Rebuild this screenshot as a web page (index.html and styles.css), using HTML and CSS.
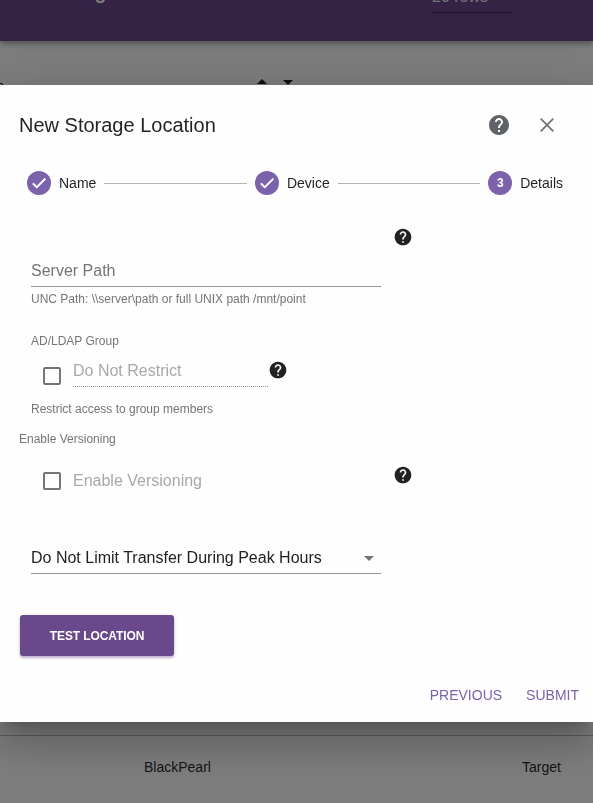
FILE: index.html
```
<!DOCTYPE html>
<html lang="en">
<head>
    <meta charset="UTF-8">
    <meta name="viewport" content="width=device-width, initial-scale=1.0">
    <title>New Storage Location</title>
    <link rel="stylesheet" href="styles.css">
</head>
<body>
    <svg class="symbols">
        <symbol id="help" viewBox="0 0 24 24">
            <path d="M12 2C6.48 2 2 6.48 2 12s4.48 10 10 10 10-4.48 10-10S17.52 2 12 2zm1 17h-2v-2h2v2zm2.07-7.75l-.9.92C13.45 12.9 13 13.5 13 15h-2v-.5c0-1.1.45-2.1 1.17-2.83l1.24-1.26c.37-.36.59-.86.59-1.41 0-1.1-.9-2-2-2s-2 .9-2 2H8c0-2.21 1.79-4 4-4s4 1.79 4 4c0 .88-.36 1.68-.93 2.25z"/>
        </symbol>
        <symbol id="check" viewBox="0 0 24 24">
            <path d="M9 16.2L4.8 12l-1.4 1.4L9 19 21 7l-1.4-1.4L9 16.2z"/>
        </symbol>
    </svg>

    <div class="page">
        <div class="toolbar">
            <span class="toolbar-title">Storage</span>
            <span class="rows">20 rows</span>
        </div>
        <div class="table-head">
            <span class="sort-name">Name</span>
            <span class="arrow-up"></span>
            <span class="arrow-down"></span>
        </div>
        <div class="table-row">
            <span>BlackPearl</span>
            <span>Target</span>
        </div>
    </div>

    <div class="overlay">
        <div class="dialog">
            <div class="dialog-header">
                <h2>New Storage Location</h2>
                <svg class="header-help"><use href="#help"/></svg>
                <svg class="close" viewBox="0 0 14 14"><path d="M.7.7l12.6 12.6M13.3.7L.7 13.3"/></svg>
            </div>

            <div class="stepper">
                <span class="step-icon"><svg><use href="#check"/></svg></span>
                <span class="step-label">Name</span>
                <span class="step-line"></span>
                <span class="step-icon"><svg><use href="#check"/></svg></span>
                <span class="step-label">Device</span>
                <span class="step-line"></span>
                <span class="step-icon">3</span>
                <span class="step-label">Details</span>
            </div>

            <div class="form">
                <div class="row path-row">
                    <div class="field">
                        <div class="input placeholder">Server Path</div>
                        <div class="hint">UNC Path: \\server\path or full UNIX path /mnt/point</div>
                    </div>
                    <svg class="help"><use href="#help"/></svg>
                </div>

                <div class="label group-label">AD/LDAP Group</div>
                <div class="row group-row">
                    <span class="checkbox"></span>
                    <div class="input disabled">Do Not Restrict</div>
                    <svg class="help"><use href="#help"/></svg>
                </div>
                <div class="hint group-hint">Restrict access to group members</div>

                <div class="label version-label">Enable Versioning</div>
                <div class="row version-row">
                    <span class="checkbox"></span>
                    <span class="check-text">Enable Versioning</span>
                    <svg class="help"><use href="#help"/></svg>
                </div>

                <div class="input select">
                    <span>Do Not Limit Transfer During Peak Hours</span>
                    <span class="caret"></span>
                </div>

                <button class="btn-test">TEST LOCATION</button>
            </div>

            <div class="actions">
                <button class="btn-link">PREVIOUS</button>
                <button class="btn-link">SUBMIT</button>
            </div>
        </div>
    </div>
</body>
</html>
```
FILE: styles.css
```
* {
    box-sizing: border-box;
}
body {
    margin: 0;
    height: 803px;
    overflow: hidden;
    background-color: #fafafa;
    font-family: "Liberation Sans", Arial, sans-serif;
    color: rgba(0, 0, 0, 0.87);
}
svg {
    display: block;
    flex: none;
}
.symbols {
    position: absolute;
    width: 0;
    height: 0;
}

/* page behind the dialog */
.page {
    height: 803px;
    overflow: hidden;
}
.toolbar {
    display: flex;
    height: 41px;
    padding-left: 46px;
    background-color: #6b468c;
    color: #fff;
    box-shadow: 0 2px 4px -1px rgba(0, 0, 0, 0.2), 0 4px 5px rgba(0, 0, 0, 0.14), 0 1px 10px rgba(0, 0, 0, 0.12);
}
.toolbar-title {
    width: 386px;
    margin-top: -19px;
    font-size: 19px;
    font-weight: bold;
    line-height: 23px;
}
.rows {
    width: 80px;
    height: 31px;
    margin-top: -18px;
    padding-top: 6px;
    border-bottom: 1px solid #42224f;
    font-size: 16px;
    line-height: 18px;
    color: rgba(255, 255, 255, 0.87);
}
.table-head {
    display: flex;
    align-items: flex-start;
    height: 695px;
    padding-top: 38px;
    border-bottom: 1px solid #b4b4b4;
}
.sort-name {
    width: 255px;
    margin: -1px 0 0 -33px;
    font-size: 14px;
    line-height: 16px;
}
.arrow-up,
.arrow-down {
    margin-left: 35px;
    border: 5px solid transparent;
    border-top: 0;
    border-bottom-color: #222;
}
.arrow-down {
    margin: 1px 0 0 16px;
    border-top: 5px solid #222;
    border-bottom: 0;
}
.table-row {
    display: flex;
    justify-content: space-between;
    padding: 23px 32px 0 144px;
    font-size: 14px;
    line-height: 16px;
}

.overlay {
    position: fixed;
    inset: 0;
    padding-top: 85px;
    background-color: rgba(0, 0, 0, 0.5);
}
.dialog {
    height: 637px;
    background-color: #fefefe;
    box-shadow: 0 11px 15px -7px rgba(0, 0, 0, 0.2), 0 24px 38px 3px rgba(0, 0, 0, 0.14), 0 9px 46px 8px rgba(0, 0, 0, 0.12);
}
.dialog-header {
    display: flex;
    align-items: center;
    height: 80px;
    padding: 0 39px 0 19px;
}
.dialog-header h2 {
    flex: 1;
    margin: 0;
    font-size: 20px;
    font-weight: normal;
}
.header-help {
    width: 24px;
    height: 24px;
    fill: #5f6368;
}
.close {
    width: 14px;
    height: 14px;
    margin-left: 29px;
    fill: none;
    stroke: #757575;
    stroke-width: 1.9;
}

.stepper {
    display: flex;
    align-items: center;
    gap: 8px;
    padding: 6px 30px 0 27px;
}
.step-icon {
    display: flex;
    align-items: center;
    justify-content: center;
    width: 24px;
    height: 24px;
    border-radius: 50%;
    background-color: #7b62aa;
    color: #fff;
    font-size: 12px;
    font-weight: bold;
}
.step-icon svg {
    width: 18px;
    height: 18px;
    fill: #fff;
    stroke: #fff;
    stroke-width: 0.9;
}
.step-label {
    font-size: 14px;
}
.step-line {
    flex: 1;
    height: 1px;
    background-color: #b3b3b3;
}

.form {
    height: 475px;
    padding: 33px 20px 0 31px;
}
.row {
    display: flex;
    align-items: flex-start;
}
.field {
    width: 350px;
}
.input {
    height: 25px;
    border-bottom: 1px solid #949494;
    font-size: 16px;
    line-height: 18px;
}
.placeholder {
    color: #757575;
}
.hint,
.label {
    font-size: 12px;
    line-height: 14px;
    color: #757575;
}
.help {
    width: 20px;
    height: 20px;
    margin-top: -1px;
    fill: #222;
}
.path-row .field {
    padding-top: 34px;
}
.path-row .hint {
    margin-top: 5px;
}
.path-row .help {
    margin-left: 12px;
}
.group-label {
    margin-top: 28px;
}
.group-row {
    margin-top: 13px;
    padding-left: 12px;
}
.checkbox {
    flex: none;
    width: 18px;
    height: 18px;
    margin-top: 6px;
    border: 2px solid #757575;
    border-radius: 2px;
}
.disabled {
    width: 195px;
    height: 26px;
    margin-left: 12px;
    padding-top: 1px;
    border-bottom: 1px dotted #949494;
    color: #a8a8a8;
}
.group-hint {
    margin-top: 15px;
}
.version-label {
    margin: 16px 0 0 -12px;
}
.version-row {
    margin-top: 20px;
    padding-left: 12px;
}
.check-text {
    width: 320px;
    margin: 6px 0 0 12px;
    font-size: 16px;
    line-height: 18px;
    color: #a8a8a8;
}
.select {
    display: flex;
    justify-content: space-between;
    width: 350px;
    margin-top: 59px;
    color: #222;
}
.caret {
    margin: 7px 7px 0 0;
    height: 5px;
    border: 5px solid transparent;
    border-top-color: #757575;
    border-bottom: 0;
}
button {
    border: 0;
    background: none;
    font-family: inherit;
    padding: 0;
}
.btn-test {
    width: 154px;
    height: 41px;
    margin: 41px 0 0 -11px;
    border-radius: 3px;
    background-color: #69488b;
    color: #fff;
    font-size: 12px;
    font-weight: bold;
    letter-spacing: -0.1px;
    box-shadow: 0 2px 2px rgba(105, 72, 139, 0.3), 0 1px 4px rgba(105, 72, 139, 0.2);
}
.actions {
    display: flex;
    justify-content: flex-end;
    gap: 24px;
    padding: 17px 14px 0 0;
}
.btn-link {
    font-size: 14px;
    line-height: 16px;
    color: #7b62aa;
}
```
